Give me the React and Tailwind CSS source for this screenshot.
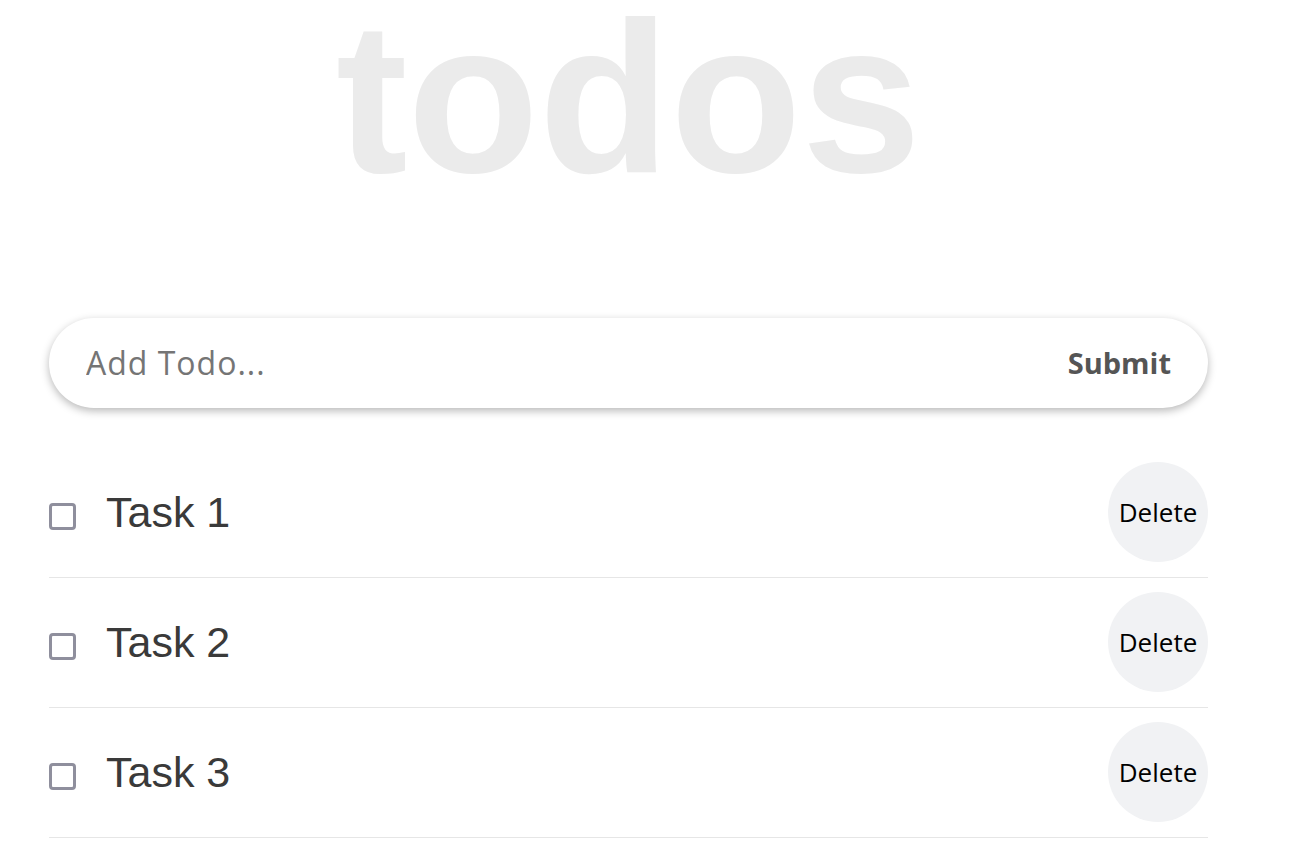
import React from 'react';

const TODOS = ['Task 1', 'Task 2', 'Task 3'];

const TodoRow = ({ title }) => (
  <li className="flex items-center pt-[14px] pb-[15px] border-b border-[#e6e6e6]">
    <span className="w-[27px] h-[27px] mt-[9px] border-[3px] border-[#8f8f9d] rounded-[4px] bg-white shrink-0"></span>
    <span className="ml-[30px] text-[43px] text-[#3a3a3a] font-['Liberation_Sans',Arial,sans-serif]">{title}</span>
    <button className="ml-auto w-[100px] h-[100px] rounded-full bg-[#f1f2f4] text-black text-[26px] font-['Open_Sans','Noto_Sans',sans-serif]">
      Delete
    </button>
  </li>
);

export default function App() {
  return (
    <div className="min-h-screen bg-white">
      <div className="ml-[49px] w-[1159px]">
        <h1 className="text-center text-[215px] leading-[196px] h-[196px] font-bold text-[#ebebeb] font-['Liberation_Sans',Arial,sans-serif]">
          todos
        </h1>

        <form className="mt-[122px] h-[90px] rounded-full bg-white shadow-[0_3px_8px_rgba(0,0,0,0.28)] flex items-center pl-[37px] pr-[37px]">
          <input
            type="text"
            placeholder="Add Todo..."
            className="flex-1 bg-transparent outline-none text-[32px] tracking-[1px] text-[#333] placeholder:text-[#757575] font-['Open_Sans','Noto_Sans',sans-serif]"
          />
          <button type="button" className="text-[29px] font-bold text-[#555] font-['Open_Sans','Noto_Sans',sans-serif]">
            Submit
          </button>
        </form>

        <ul className="mt-[40px]">
          {TODOS.map((t) => (
            <TodoRow key={t} title={t} />
          ))}
        </ul>
      </div>
    </div>
  );
}
